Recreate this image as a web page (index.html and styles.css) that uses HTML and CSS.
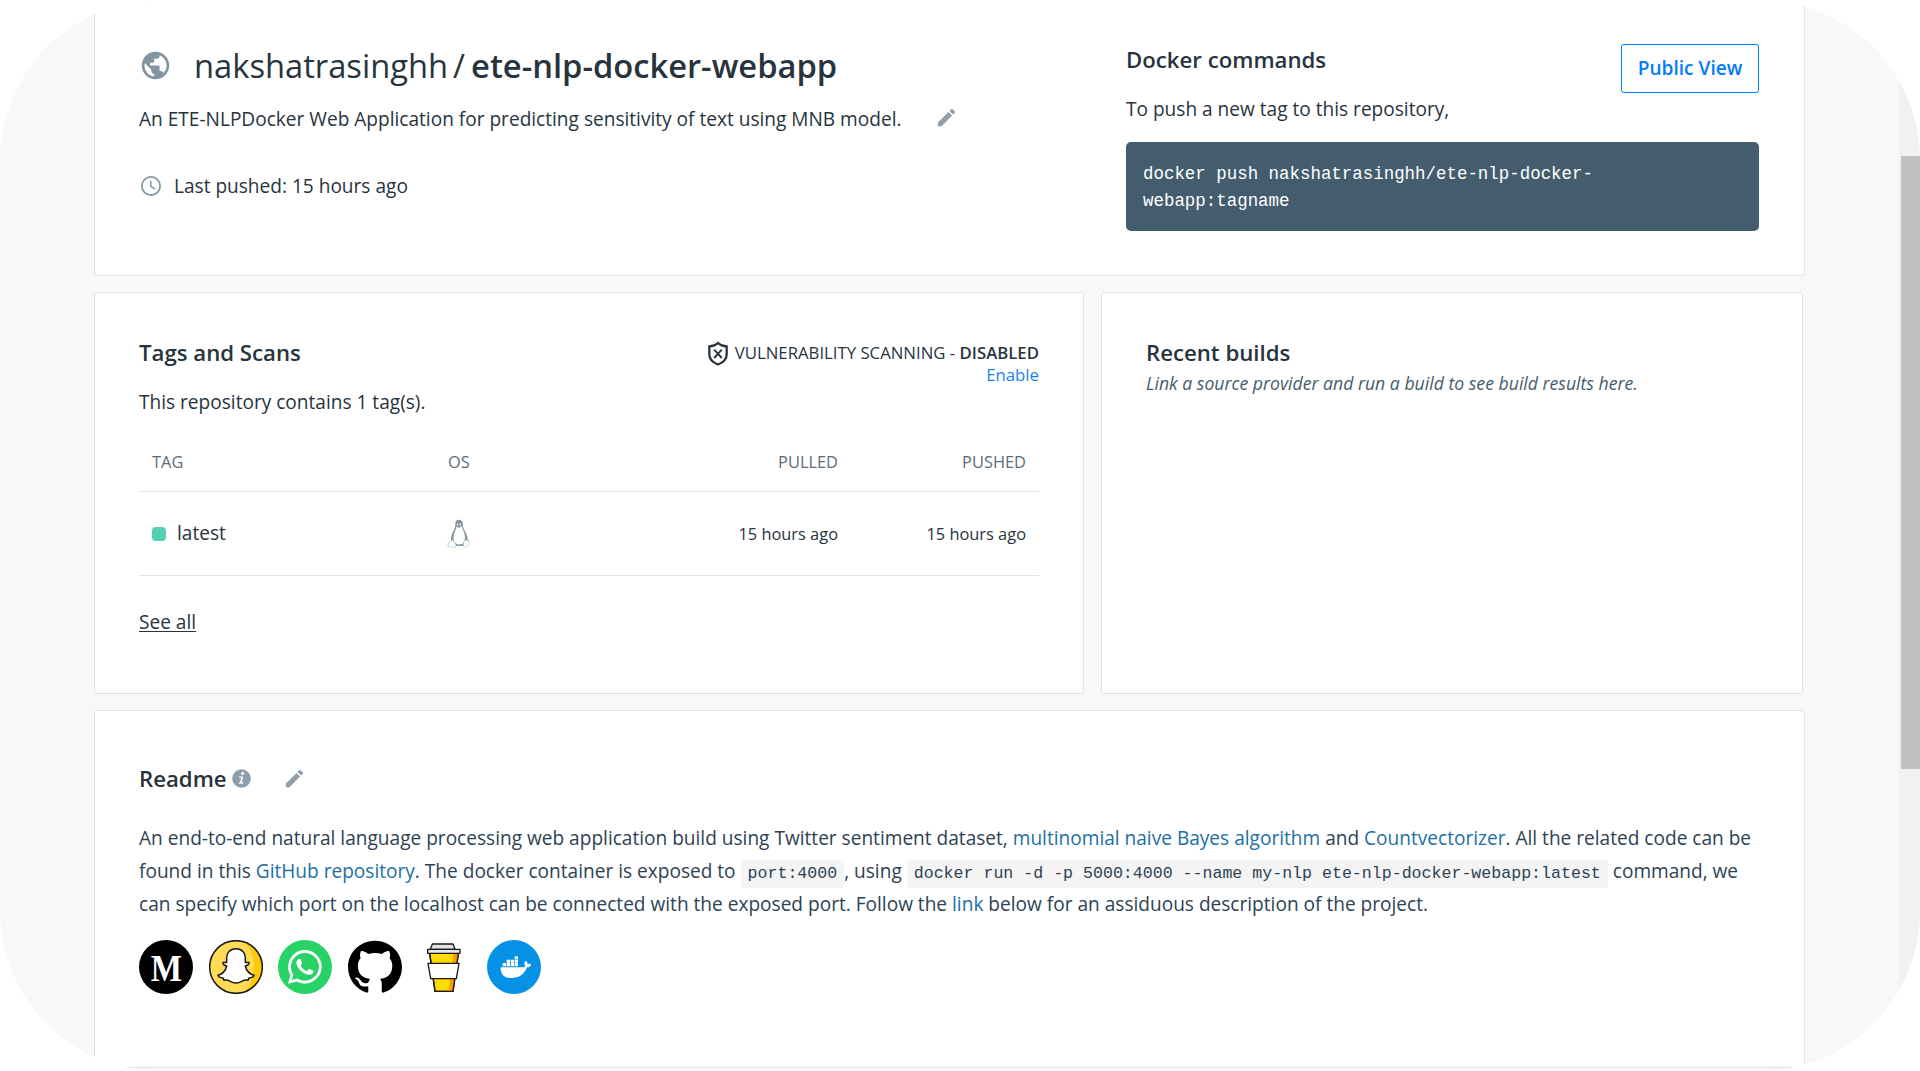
FILE: index.html
```html
<!DOCTYPE html>
<html lang="en">
<head>
<meta charset="utf-8">
<title>nakshatrasinghh/ete-nlp-docker-webapp</title>
<link rel="stylesheet" href="styles.css">
</head>
<body>
<svg width="0" height="0" class="sprite">
  <symbol id="pencil" viewBox="0 0 24 24"><path d="M3 17.25V21h3.75L17.81 9.94l-3.75-3.75L3 17.25zM20.71 7.04a1 1 0 0 0 0-1.41l-2.34-2.34a1 1 0 0 0-1.41 0l-1.83 1.83 3.75 3.75 1.83-1.83z"/></symbol>
</svg>
<div class="window">
  <main class="page">
    <section class="card summary">
      <div class="about">
        <h1 class="title">
          <svg class="globe" viewBox="0 0 24 24"><path d="M12 2C6.48 2 2 6.48 2 12s4.48 10 10 10 10-4.480 10-10S17.520 2 12 2zm-1 17.930c-3.950-.490-7-3.850-7-7.930 0-.620.080-1.210.210-1.790L9 15v1c0 1.100.900 2 2 2v1.930zm6.900-2.540c-.260-.810-1-1.390-1.900-1.390h-1v-3c0-.550-.450-1-1-1H8v-2h2c.550 0 1-.450 1-1V7h2c1.100 0 2-.900 2-2v-.410c2.930 1.190 5 4.060 5 7.410 0 2.080-.800 3.970-2.100 5.390z"/></svg>
          <span class="owner">nakshatrasinghh</span><span class="slash">/</span><span class="repo">ete-nlp-docker-webapp</span>
        </h1>
        <div class="description">
          <p>An ETE-NLPDocker Web Application for predicting sensitivity of text using MNB model.</p>
          <svg class="pencil"><use href="#pencil"/></svg>
        </div>
        <div class="pushed">
          <svg class="clock" viewBox="0 0 24 24"><path d="M12 2a10 10 0 1 0 0 20 10 10 0 0 0 0-20zm0 18.300a8.300 8.300 0 1 1 0-16.600 8.300 8.300 0 0 1 0 16.600zM12.500 7H11v5.800l4.800 2.900.7-1.200-4-2.400z"/></svg>
          <span>Last pushed: 15 hours ago</span>
        </div>
      </div>
      <div class="commands">
        <div class="commands-head">
          <div>
            <h2>Docker commands</h2>
            <p class="hint">To push a new tag to this repository,</p>
          </div>
          <a class="button">Public View</a>
        </div>
        <pre class="terminal">docker push nakshatrasinghh/ete-nlp-docker-
webapp:tagname</pre>
      </div>
    </section>

    <div class="row">
      <section class="card tags">
        <div class="tags-head">
          <h2>Tags and Scans</h2>
          <div class="scan">
            <div class="scan-line">
              <svg class="shield" viewBox="0 0 22 25" fill="none"><path d="M11 2 C8.500 4.500 5.500 5.300 2.300 5.500V13c0 5 3.500 8.500 8.700 10.500 5.200-2 8.700-5.500 8.700-10.500V5.500C16.500 5.300 13.500 4.500 11 2z" stroke-width="2.300"/><path d="M7.200 8.700l7.600 8.300M14.800 8.700L7.200 17" stroke-width="1.900"/></svg>
              <span>VULNERABILITY SCANNING - <b>DISABLED</b></span>
            </div>
            <a class="enable">Enable</a>
          </div>
        </div>
        <p class="count">This repository contains 1 tag(s).</p>
        <div class="table">
          <div class="tr th"><span>TAG</span><span>OS</span><span class="right">PULLED</span><span class="right">PUSHED</span></div>
          <div class="tr td">
            <span class="tag"><i class="status"></i>latest</span>
            <svg class="tux" viewBox="0 0 24 30"><path d="M12 .8c-2.700 0-3.800 2-3.700 4.500.1 3-.6 4.500-2 7C4.500 15.300 3.500 18.500 4 22l5 5h7l4.500-5c.6-3.500-.7-7-2.500-9.800-1.500-2.300-2.100-4-2.100-6.500C15.900 2.600 14.500.8 12 .8z" fill="#8395a0"/><path d="M9.600 7.500C9 11 6.800 14 6.500 18c-.2 3 1.500 7.500 5.500 7.500 4.500 0 6-3.500 6-7 0-4.500-2.600-7.500-3.300-11.500L12 9z" fill="#fff"/><path d="M10.100 4.600h1.300v1.800h-1.300zM12.700 4.600H14v1.800h-1.300z" fill="#e8edf0"/><path d="M5.500 20.500l3.300 5.200c.7 1.700-.2 2.900-2 2.800L1.200 27.200c-.7-.7.2-2 0-3.600 1.500-.6 3.300-.2 4.300-3.100zM17.600 20.500c-.8 1.800-.6 4.300-1.400 6.400.5 1.700 2.300 1.900 3.300.8l3.700-3.200c-1.400-1-1.300-1.700-1.800-3.600-1.200 1-2.800.6-3.800-.4z" fill="#fff" stroke="#bac5cc" stroke-width=".8"/></svg>
            <span class="right">15 hours ago</span><span class="right">15 hours ago</span>
          </div>
        </div>
        <a class="see-all">See all</a>
      </section>
      <section class="card builds">
        <h2>Recent builds</h2>
        <p>Link a source provider and run a build to see build results here.</p>
      </section>
    </div>

    <section class="card readme">
      <div class="readme-head">
        <h2>Readme</h2>
        <svg class="info" viewBox="0 0 19 19"><circle cx="9.500" cy="9.500" r="9.300" fill="#8f9eab"/><circle cx="10.600" cy="4.600" r="1.500" fill="#fff"/><path d="M7.200 7.500h4l-1.500 6h1.600l-.3 1.300H6.600l.3-1.300h1.200l1.100-4.700H6.900z" fill="#fff"/></svg>
        <svg class="pencil"><use href="#pencil"/></svg>
      </div>
      <div class="prose">
        <div>An end-to-end natural language processing web application build using Twitter sentiment dataset, <a>multinomial naive Bayes algorithm</a> and <a>Countvectorizer</a>. All the related code can be</div>
        <div>found in this <a>GitHub repository</a>. The docker container is exposed to <code>port:4000</code>, using <code>docker run -d -p 5000:4000 --name my-nlp ete-nlp-docker-webapp:latest</code> command, we</div>
        <div>can specify which port on the localhost can be connected with the exposed port. Follow the <a>link</a> below for an assiduous description of the project.</div>
      </div>
      <div class="social">
        <svg viewBox="0 0 162 162"><circle cx="81" cy="81" r="81"/><text class="medium" x="35" y="123" textLength="94" lengthAdjust="spacingAndGlyphs">M</text></svg>
        <svg viewBox="0 0 162 162"><circle cx="81" cy="81" r="79" fill="#ffdb57"/><path d="M105 6a79 79 0 0 1 0 150C145 125 145 37 105 6z" fill="#ffca05"/><circle cx="81" cy="81" r="79" fill="none" stroke="#1c1a17" stroke-width="4.500"/><path d="M81 26c-19 0-28 13-28 28v13c-4 2-9-2-11 1-2 4 4 8 11 10-3 14-13 24-26 28 1 6 9 7 15 8l3 7c8-2 13 0 19 3 5 3 9 5 17 5s12-2 17-5c6-3 11-5 19-3l3-7c6-1 14-2 15-8-13-4-23-14-26-28 7-2 13-6 11-10-2-3-7 1-11-1V54c0-15-9-28-28-28z" fill="#fff" stroke="#1c1a17" stroke-width="4.500" stroke-linejoin="round"/></svg>
        <svg viewBox="0 0 162 162"><circle cx="81" cy="81" r="81" fill="#27d367"/><path transform="translate(30 23) scale(.226)" fill="#fff" d="M380.900 97.100C339 55.100 283.200 32 223.900 32c-122.400 0-222 99.600-222 222 0 39.100 10.200 77.300 29.600 111L0 480l117.700-30.900c32.400 17.700 68.900 27 106.100 27h.1c122.300 0 224.100-99.600 224.100-222 0-59.300-25.200-115-67.100-157zm-157 341.600c-33.200 0-65.700-8.900-94-25.700l-6.700-4-69.800 18.300L72 359.200l-4.400-7c-18.500-29.400-28.200-63.300-28.200-98.200 0-101.700 82.800-184.500 184.600-184.500 49.300 0 95.600 19.200 130.400 54.100 34.800 34.900 56.200 81.200 56.100 130.500 0 101.800-84.900 184.600-186.600 184.600zm101.200-138.200c-5.500-2.800-32.800-16.200-37.900-18-5.100-1.900-8.800-2.800-12.500 2.800-3.700 5.600-14.300 18-17.600 21.800-3.200 3.700-6.500 4.200-12 1.400-32.600-16.300-54-29.100-75.500-66-5.700-9.800 5.700-9.100 16.300-30.300 1.800-3.700.9-6.900-.5-9.700-1.400-2.800-12.500-30.100-17.100-41.200-4.500-10.800-9.100-9.300-12.500-9.500-3.200-.2-6.900-.2-10.600-.2-3.700 0-9.700 1.400-14.800 6.900-5.100 5.600-19.400 19-19.400 46.300 0 27.300 19.900 53.700 22.600 57.400 2.800 3.700 39.100 59.700 94.800 83.800 35.200 15.200 49 16.500 66.600 13.900 10.700-1.600 32.800-13.400 37.400-26.400 4.600-13 4.600-24.100 3.200-26.400-1.300-2.500-5-3.900-10.500-6.600z"/></svg>
        <svg viewBox="0 0 16 16"><path d="M8 .2C3.580.2 0 3.700 0 8c0 3.540 2.290 6.530 5.470 7.590.4.070.55-.17.55-.38 0-.19-.01-.82-.01-1.490-2.010.37-2.530-.49-2.690-.94-.09-.23-.48-.94-.82-1.130-.28-.15-.68-.52-.01-.53.63-.01 1.080.58 1.230.82.72 1.210 1.870.87 2.330.66.070-.52.28-.87.510-1.070-1.780-.2-3.640-.89-3.640-3.950 0-.87.310-1.590.82-2.150-.08-.2-.36-1.020.08-2.120 0 0 .67-.21 2.200.82.640-.18 1.320-.27 2-.27.68 0 1.360.09 2 .27 1.530-1.040 2.200-.82 2.200-.82.440 1.100.16 1.920.08 2.120.510.56.82 1.270.82 2.150 0 3.070-1.870 3.750-3.650 3.950.29.25.54.73.54 1.480 0 1.070-.01 1.930-.01 2.200 0 .21.15.46.55.38A8.013 8.013 0 0 0 16 8C16 3.700 12.420.2 8 .2z"/></svg>
        <svg viewBox="0 0 162 162"><g stroke="#1c1a17" stroke-width="4" stroke-linejoin="round"><path d="M38 40h86l-16 114H54z" fill="#ffdc00"/><path d="M110 40h14l-16 114H95z" fill="#ff9a00" stroke="none"/><path d="M38 40h86l-16 114H54z" fill="none"/><path d="M46 12h62l6 16H40z" fill="#e3e3e3"/><path d="M32 28h97v12H32z" fill="#e9e9e9"/><path d="M33 70h93l-8 46H41z" fill="#fff"/></g></svg>
        <svg viewBox="0 0 162 162"><circle cx="81" cy="81" r="81" fill="#0591e5"/><g fill="#fff"><path d="M41 82h65c5 0 8-2 9-4-4-5-4-11 1-16 4 3 6 6 6 10 4-1 8 0 11 2-2 5-7 8-13 8-8 21-23 32-47 32-22 0-33-12-32-32z"/><path d="M47 69h10v10H47zM59 69h10v10H59zM71 69h10v10H71zM83 69h10v10H83zM59 59h10v9H59zM71 59h10v9H71zM83 59h10v9H83zM83 49h10v9H83z"/></g></svg>
      </div>
    </section>
  </main>
  <div class="scrollbar"><div class="thumb"></div></div>
</div>
</body>
</html>
```
FILE: styles.css
```css
* { box-sizing: border-box; margin: 0; padding: 0; }
body { width: 1920px; height: 1071px; overflow: hidden; background: #fff; color: #27343e; font: 400 19.08px/26px "Open Sans", "Noto Sans", sans-serif; }
svg { display: block; flex: none; }
.sprite { position: absolute; }
.window { display: flex; justify-content: space-between; height: 1071px; border-radius: 160px; overflow: hidden; background: #f7f8fa; }
.page { width: 1711px; margin-left: 94px; }
.card { background: #fff; border: 1px solid #dfe3e6; border-radius: 3px; }
h2 { font-size: 22.2px; line-height: 30px; font-weight: 600; }

.summary { display: flex; justify-content: space-between; height: 276px; border-top: 0; border-radius: 0 0 3px 3px; padding: 0 45px 0 44px; }
.about { padding-top: 43px; }
.title { display: flex; align-items: center; height: 45px; font-size: 32.7px; line-height: 45px; font-weight: 400; }
.globe { width: 33px; height: 33px; margin: 0 22px 0 0; fill: #8296a1; }
.slash { margin: 0 6px 0 5px; }
.repo { font-weight: 600; }
.description { display: flex; align-items: flex-start; margin-top: 18px; }
.pencil { width: 23px; height: 23px; fill: #8f9eab; }
.description .pencil { margin-left: 34px; }
.pushed { display: flex; align-items: center; height: 26px; margin-top: 41px; }
.clock { width: 24px; height: 24px; margin-right: 11px; fill: #8296a1; }
.commands { width: 633px; padding-top: 44px; }
.commands-head { display: flex; justify-content: space-between; height: 98px; }
.commands-head h2 { margin-top: 1px; }
.hint { margin-top: 21px; }
.button { width: 138px; height: 49px; border: 1px solid #007bff; border-radius: 3px; color: #007bff; font-weight: 600; line-height: 47px; text-align: center; }
.terminal { height: 89px; padding: 19px 17px 16px; border-radius: 5px; background: #445d6e; color: #fff; font: 17.45px/27px "Liberation Mono", monospace; }

.row { display: flex; gap: 17px; margin: 16px 0; height: 402px; }
.tags { width: 990px; padding: 45px 44px 0; }
.tags-head { display: flex; justify-content: space-between; height: 51px; }
.scan { font-size: 16.75px; line-height: 22px; text-align: right; }
.scan-line { display: flex; height: 22px; margin-top: 4px; gap: 6px; align-items: center; }
.scan b { font-weight: 600; }
.shield { width: 22px; height: 25px; stroke: #27343e; }
.enable { color: #1a7ff5; }
.table { margin-top: 17px; }
.tr { display: grid; grid-template-columns: 296px 220px 1fr 188px; padding: 0 13px; border-bottom: 1px solid #dfe3e6; font-size: 16.4px; align-items: center; }
.th { height: 60px; color: #5d6c7a; line-height: 60px; }
.td { height: 84px; line-height: 83px; }
.right { text-align: right; }
.tag { display: flex; align-items: center; font-size: 19.08px; }
.status { width: 14px; height: 14px; margin-right: 11px; border-radius: 4px; background: #54d1b1; }
.tux { width: 24px; height: 30px; margin-left: -1px; }
.see-all { display: inline-block; margin-top: 33px; text-decoration: underline; text-underline-offset: 2px; text-decoration-thickness: 1px; }
.builds { width: 702px; padding: 45px 44px 0; }
.builds p { font-size: 17.65px; line-height: 24px; font-style: italic; color: #445d6e; margin-top: 3px; }

.readme { height: 358px; padding: 53px 44px 0; }
.readme-head { display: flex; height: 30px; }
.info { width: 19px; height: 19px; margin: 5px 32px 0 5px; }
.readme-head .pencil { margin-top: 3px; }
.prose { margin-top: 28px; line-height: 33px; white-space: nowrap; color: #2d4254; }
.prose div { height: 33px; }
.prose a { color: #1d6fa5; }
.prose code { padding: 4px 7px 5px; background: #f4f4f4; border-radius: 3px; font: 16.6px/20px "Liberation Mono", monospace; }
.social { display: flex; gap: 15.5px; margin-top: 19px; }
.social svg { width: 54px; height: 54px; }
.medium { font: 700 114px "Liberation Serif", serif; fill: #fff; }

.scrollbar { width: 21px; background: #f1f1f1; padding: 156px 0 0 2px; }
.thumb { height: 613px; background: #c1c1c1; }
```
